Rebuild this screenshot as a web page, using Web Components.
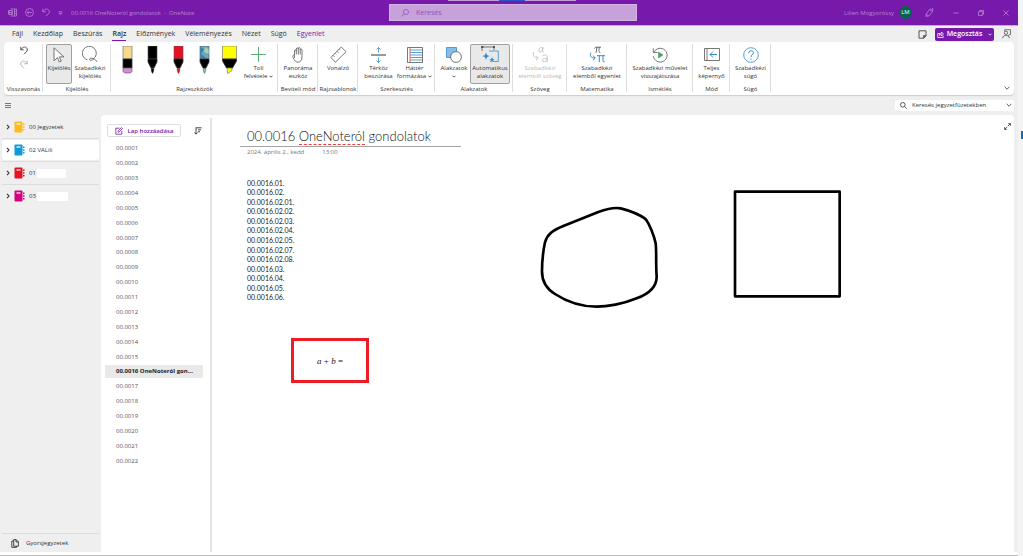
<!DOCTYPE html>
<html lang="hu">
<head>
<meta charset="utf-8">
<title>00.0016 OneNoteról gondolatok - OneNote</title>
<style>
  html, body { margin: 0; height: 100%; }
  body { background: #f4f4f4; color: #333; font: 7px/10px "Open Sans", "Noto Sans", sans-serif; overflow: hidden; }
</style>
</head>
<body>
<app-window></app-window>
<script>
const BASE = `
  * { box-sizing: border-box; }
  button, input { font: inherit; color: inherit; background: none; border: 0; padding: 0; margin: 0; outline: 0; }
  button { display: flex; align-items: center; justify-content: center; white-space: nowrap; }
  a { color: inherit; text-decoration: none; }
`;
function define(name, css, html) {
  customElements.define(name, class extends HTMLElement {
    connectedCallback() {
      if (this.shadowRoot) return;
      const t = document.createElement('template');
      t.innerHTML = `<style>${BASE}${css}</style>${typeof html === 'function' ? html(this) : html}`;
      this.attachShadow({ mode: 'open' }).append(t.content.cloneNode(true));
    }
  });
}

const pen = (top, tip, extra = '') => `
  <path d="M5 0h9v13H5z" fill="${top}" stroke="#555" stroke-width=".6"/>
  <path d="M5 13h9v3l-3 6H8l-3-6z" fill="#000"/><path d="M8 22.500h3l-.6 3.500-.9 1.500-.9-1.500z" fill="${tip}" stroke="#333" stroke-width=".4"/>${extra}`;

/* name: [width, height, drawing] */
const ICONS = {
  app: [9, 9, '<path d="M2.500 1h6v7h-6M.5 2.500h4v4h-4zM1.500 5.700V3.500l2 2.200V3.500M6.500 1v7M6.500 3.200h2M6.500 5.500h2"/>'],
  back: [9, 9, '<circle cx="4.500" cy="4.500" r="4"/><path d="M7 4.500H2.200M4 2.700 2.200 4.500 4 6.300"/>'],
  undo: [8, 9, '<path d="M.8.8v3h3M1 3.600C2.500 1 5 .4 6.500 1.800s1 3-.4 4.200L4 8.300"/>'],
  redo: [8, 9, '<path d="M7.200.8v3h-3M7 3.600C5.500 1 3 .4 1.500 1.800s-1 3 .4 4.200L4 8.300"/>'],
  more: [5, 4, '<path d="M.5.800h4M1 2.200h3L2.500 3.700z"/>'],
  search: [7, 7, '<circle cx="2.800" cy="2.800" r="2.300"/><path d="m4.500 4.500 2.200 2.200"/>'],
  searchflip: [8, 8, '<circle cx="5" cy="3" r="2.500"/><path d="M3.200 4.800.5 7.500"/>'],
  pencil: [9, 9, '<path d="M4.500 1.500 8 .7 7.500 3.500 3.800 8 1 6.500zM1 6.500.8 8.300 3.800 8M4.500 1.500l3 2"/>'],
  min: [6, 8, '<path d="M.5 4h5"/>'],
  restore: [6, 6, '<path d="M.5 1.700h3.800v3.800H.5zM1.700 1.700V.5h3.800v3.800H4.300"/>'],
  close: [6, 6, '<path d="m.5.500 5 5M5.500.500l-5 5"/>'],
  note: [9, 9, '<path d="M1 .8h7v5L5.500 8.200H1z" stroke-width="1"/><path d="M8 5.500H5.500v2.700z" fill="currentColor"/>'],
  share: [7, 7, '<path d="M3 2.500H.8v4h5.400V4.800M2.300 4.300c.3-1.500 1.300-2 2.200-2V1l2 2-2 2V3.700c-1 0-1.700 0-2.200.6z"/>'],
  person: [9, 10, '<path d="M2.800 2.500V.7h5.700v4.800H7.300L6.300 7"/><circle cx="4" cy="3.800" r="1.700"/><path d="M.6 9.200C1 5.300 7 5.300 7.400 9.200"/>'],
  down: [4, 3, '<path d="M.5.700 2 2.200 3.500.7"/>'],
  downbig: [6, 4, '<path d="M.6.800 3 3.200 5.400.8"/>'],
  right: [4, 6, '<path d="M1 .800 3 3 1 5.200" stroke-width="1.100"/>'],
  menu: [6, 7, '<path d="M0 1h6v1H0zM0 3h6v1H0zM0 5h6v1H0z" fill="#777" stroke="none"/>'],
  compose: [8, 8, '<path d="M4.500 1.200H.8v6h6V3.800M3 5.200l.4-1.500L6.500.600l1 1-3.100 3.100z"/>'],
  sort: [8, 8, '<path d="M2 .500v6.500M.5 5.500 2 7.200l1.500-1.700M2 .8h5.600M4 2.800h3M4 4.700h2" stroke-width=".9"/>'],
  expand: [7, 7, '<path d="M3.900 3.100 6.400.600M4.200.600h2.200v2.200M3.100 3.900.6 6.400M.6 4.200v2.200h2.200"/>'],
  quick: [8, 9, '<path d="M2.700.600h2.500l2.200 2.200v4.400H2.700zM5 .600V3h2.400M2.700 2H.8v6.400h4.700V7.200" stroke-width=".9"/>'],
  cursor: [12, 16, '<path d="M1 .800v13l3.400-3.200 2 4.400 1.900-.9-2-4.200h4.600z" fill="#fafafa"/>'],
  lasso: [16, 17, '<path d="M11 13.200a7 7 0 1 0-5.500.8M11.500 13c-2-1.500-4-.8-4 .4s2.500 1.500 4.300-.5c1.200.3 2.300 1.200 3.200 3"/>'],
  plus: [15, 15, '<path d="M7.500 0v15M0 7.500h15" stroke="#4aa564" stroke-width=".9"/>'],
  hand: [12, 16, '<path d="M2.500 8.500V4c0-1.500 1.800-1.500 1.800 0V2c0-1.500 2-1.500 2 0V1.500c0-1.300 1.900-1.300 1.900 0V3c0-1.300 1.800-1.200 1.800 0v7c0 3-1.500 5.200-4 5.200-2.300 0-3.300-1.500-5-4.700C.3 8.600 1.500 7.300 2.500 8.800V11M4.300 4v3.500M6.300 2v5.500M8.200 3v4.500"/>'],
  ruler: [17, 17, '<path d="m.8 11.500 10.500-10.500 4.700 4.700L5.500 16.200zM3 9.300l1.500 1.500M5 7.300l1 1M7 5.300l1.500 1.500M9 3.300l1 1"/>'],
  space: [15, 16, '<path d="M0 7h15v2H0z" fill="#999" stroke="none"/><path d="M7.500.500v5M7.500 10.500v5M5.500 2.500l2-2 2 2M5.500 13.500l2 2 2-2" stroke="#318bcb"/>'],
  lines: [16, 16, '<path d="M3 3h12.500M3 5.500h12.500M3 8h12.500M3 10.500h12.500M3 13h12.500" stroke="#318bcb"/><path d="M3 1v14" stroke="#d44"/><path d="M.5.500h15v15H.5z" stroke="#555"/>'],
  shapes: [16, 16, '<path d="M.5.500h10v10H.5z" fill="#83beec" stroke="#318bcb"/><circle cx="10" cy="10" r="5.400" fill="#fff"/>'],
  auto: [18, 17, '<path d="M1 5V1h13M1 1h2M13 0v4" stroke="#555"/><path d="M0 0h2v2H0zM12 0h2v2h-2z" fill="#555" stroke="none"/><path d="M8 5h9.300v10.500H9" stroke="#318bcb"/><path d="m5 6 1.300 2.900L9.200 10l-2.900 1.300L5 14.200l-1.300-2.900L.8 10l2.900-1.100zM11 10.500l1 2.300 2.300 1-2.300 1-1 2-1-2-2.300-1 2.300-1z" fill="#318bcb" stroke="#fff" stroke-width=".4"/>'],
  totext: [17, 17, '<path d="M2 6c-1.500 3-.5 6 4 6M4 9.700 6.300 12 4 14.200" /><path d="M10.500 1.500C7 .5 5.500 6 8 6.200c1.500 0 2.600-2.500 3-4.700-.7 2.500-.5 5 .8 4.500M10.500 10c1-1.500 4.700-1.500 4.700.8V16M15 12.500c-6-.3-5.500 3.300-3 3.300 1.500 0 3-.8 3-2.500"/>'],
  tomath: [17, 17, '<path d="M5.500 2.500c.5-1 1-1.300 2-1.300h4.500M8 1.300 7 6.800M10.300 1.300c-.5 3-.7 5.500 1 5.200" stroke="#444"/><path d="M2 6.500c-1.500 3-.5 5.500 4 5.500M4 9.700 6.300 12 4 14.200M8 9.700h8M10.300 9.700V16M14 9.700v5c0 1 .6 1.300 2 1.100" stroke="#318bcb" stroke-width="1"/>'],
  replay: [16, 16, '<path d="M2 5.200a6.900 6.900 0 1 1-.6 4M1.300 1.300v4.200h4.200"/><path d="M6.500 5v6l4.500-3z" fill="#4aa564" stroke="#2f8a4a" stroke-width=".5"/>'],
  full: [16, 13, '<path d="M.5.500h15v12H.5zM3 .500v12"/><path d="M13 6.500H6M9 3.500l-3 3 3 3" stroke="#318bcb" stroke-width="1"/>'],
  help: [16, 16, '<circle cx="8" cy="8" r="7.300" stroke="#318bcb"/><path d="M5.600 6.200c0-3.300 4.800-3.300 4.800-.3 0 1.800-2.400 2-2.400 4.100M8 11.300v1.300" stroke="#318bcb" stroke-width="1"/>'],
  eraser: [19, 28, '<path d="M5 0h9v13H5z" fill="#f8d98c" stroke="#777" stroke-width=".7"/><path d="M5 13h9v9H5z" fill="#000"/><path d="M5 22h9v3.500L12.500 27h-6L5 25.500z" fill="#d48cd8" stroke="#555" stroke-width=".6"/>'],
  penblack: [19, 28, pen('#000', '#000')],
  penred: [19, 28, pen('#e81123', '#e81123')],
  pengalaxy: [19, 28, pen('#68a9bd', '#7fc8bd', '<path d="M5.300 1 9 3 6 8l5 4H5.300z" fill="#3f7fae" stroke="none"/><path d="m10 1 3.600 2v5L9 6z" fill="#a8cfae" stroke="none"/>')],
  marker: [19, 28, '<path d="M2.500 0h14v13h-14z" fill="#ff0" stroke="#666" stroke-width=".6"/><path d="M2.500 13h14v2l-4 7h-6l-4-7z" fill="#000"/><path d="M7 22h5v2.500L7.500 27.500z" fill="#ff0" stroke="#666" stroke-width=".6"/>'],
  book: [11, 12, '<path d="M9 2.500h1.500v1.500H9zM9 5.200h1.500v1.500H9zM9 8h1.500v1.500H9z" fill="currentColor" stroke="none"/><rect x=".5" y=".500" width="8" height="11" rx="1" fill="currentColor" stroke="none"/><path d="M2.500 3h4" stroke="#fff" stroke-width="1.200"/>'],
};
define('ui-icon', `:host { display: block; flex: none; } svg { display: block; fill: none; stroke: currentColor; stroke-width: .8; }`,
  el => { const [w, h, d] = ICONS[el.getAttribute('name')]; return `<svg width="${w}" height="${h}" viewBox="0 0 ${w} ${h}" aria-hidden="true">${d}</svg>`; });

define('title-bar', `
  :host { display: block; position: relative; background: #7719aa; color: #b884d2; border-bottom: 1px solid #c9a6dc; }
  header { display: grid; grid-template-columns: 1fr 257px 1fr; align-items: center; height: 25px; padding: 0 9px 0 8px; }
  .left, .right { display: flex; align-items: center; }
  .left { gap: 8px; } .left span { white-space: nowrap; font-size: 6px; }
  .right { justify-content: flex-end; gap: 19px; font-size: 6px; }
  .user { display: flex; align-items: center; gap: 5px; margin-right: -6px; }
  .avatar { width: 13px; height: 13px; border-radius: 50%; background: #04634f; color: #fff; text-align: center; line-height: 13px; font-size: 6px; }
  label { justify-self: end; width: 248px; display: flex; align-items: center; gap: 7px; height: 17px; padding: 0 11px; background: #c6a1da; border: 1px solid #d2b3e2; color: #9153b8; }
  input { flex: 1; min-width: 0; } input::placeholder { color: #9153b8; opacity: 1; }
  .handle { position: absolute; top: 0; left: 44%; width: 128px; height: 1px; background: linear-gradient(90deg, #c39bd8 40%, #2b55c8 40% 60%, #c39bd8 60%); }
`, `<header>
  <div class="left"><ui-icon name="app"></ui-icon><button aria-label="Vissza"><ui-icon name="back"></ui-icon></button><button aria-label="Visszavonás"><ui-icon name="undo"></ui-icon></button><button aria-label="Továbbiak"><ui-icon name="more"></ui-icon></button><span>00.0016 OneNoteról gondolatok&nbsp; -&nbsp; OneNote</span></div>
  <label><ui-icon name="searchflip"></ui-icon><input type="text" placeholder="Keresés" aria-label="Keresés"></label>
  <div class="right"><div class="user"><span>Lilien Mogyoróssy</span><span class="avatar">LM</span></div><button aria-label="Toll"><ui-icon name="pencil"></ui-icon></button><button aria-label="Kis méret"><ui-icon name="min"></ui-icon></button><button aria-label="Előző méret"><ui-icon name="restore"></ui-icon></button><button aria-label="Bezárás"><ui-icon name="close"></ui-icon></button></div>
</header><div class="handle"></div>`);

define('ribbon-tabs', `
  :host { display: flex; align-items: center; justify-content: space-between; height: 16px; padding: 0 7px 0 12px; }
  nav, div { display: flex; align-items: center; } nav { gap: 10px; } div { gap: 8px; color: #555; }
  nav button { height: 14px; border-bottom: 1px solid transparent; }
  .on { font-weight: 600; border-color: #7719aa; } .ctx { color: #7719aa; }
  .share { background: #7719aa; color: #fff; border-radius: 2px; height: 13px; width: 59px; gap: 3px; font-weight: 600; }
  .share ui-icon:last-child { margin-left: 3px; }
`, `<nav><button>Fájl</button><button>Kezdőlap</button><button>Beszúrás</button><button class="on">Rajz</button><button>Előzmények</button><button>Véleményezés</button><button>Nézet</button><button>Súgó</button><button class="ctx">Egyenlet</button></nav>
  <div><button aria-label="Jegyzet"><ui-icon name="note"></ui-icon></button><button class="share"><ui-icon name="share"></ui-icon>Megosztás<ui-icon name="down"></ui-icon></button><button aria-label="Visszajelzés"><ui-icon name="person"></ui-icon></button></div>`);

define('ribbon-group', `
  :host { display: flex; flex-direction: column; align-items: center; justify-content: space-between; flex: none; width: var(--group-width); position: relative; font-size: 6px; line-height: 8px; }
  :host::after { content: ""; position: absolute; right: 0; top: 2px; bottom: 3px; width: 1px; background: #dedede; }
  .tools { display: flex; justify-content: center; padding-top: 2px; }
  .name { white-space: nowrap; padding-bottom: 2px; }
`, el => `<div class="tools"><slot></slot></div><div class="name">${el.getAttribute('label')}</div>`);

define('ribbon-button', `
  :host { display: block; flex: none; width: var(--button-width, 36px); }
  button { flex-direction: column; justify-content: flex-start; align-items: center; width: 100%; height: 40px; border: 1px solid transparent; border-radius: 2px; }
  .ic { height: 19px; display: flex; align-items: center; color: #555; }
  .line { display: flex; align-items: center; gap: 2px; height: 8px; }
  :host([on]) button { background: #e9e9e9; border-color: #a0a0a0; }
  :host([disabled]), :host([disabled]) .ic { color: #b9b9b9; }
`, el => {
  const arrow = el.hasAttribute('menu') ? '<ui-icon name="down"></ui-icon>' : '';
  const lines = el.getAttribute('label').split('|');
  return `<button${el.hasAttribute('disabled') ? ' disabled' : ''}><span class="ic"><ui-icon name="${el.getAttribute('icon')}"></ui-icon></span>${
    lines.map((l, i) => `<span class="line">${l}${i === lines.length - 1 ? arrow : ''}</span>`).join('')}</button>`;
});

define('pen-button', `:host { display: block; flex: 1; } button { width: 100%; height: 40px; padding: 2px 0 0; align-items: flex-start; }`,
  el => `<button aria-label="${el.getAttribute('label')}"><ui-icon name="${el.getAttribute('icon')}"></ui-icon></button>`);

define('ribbon-bar', `
  :host { display: flex; justify-content: space-between; height: 53px; margin: 0 4px; background: #fff; border-radius: 4px; box-shadow: 0 1px 1px #ccc; }
  .groups { display: flex; min-width: 0; }
  .history { display: flex; flex-direction: column; gap: 5px; padding-top: 2px; } .history button:last-child { color: #aaa; }
  .pens { display: flex; width: 128px; }
  .collapse { align-self: flex-end; margin: 0 4px 5px 0; }
`, `<div class="groups">
  <ribbon-group label="Visszavonás" style="--group-width:39px"><div class="history"><button aria-label="Visszavonás"><ui-icon name="undo"></ui-icon></button><button aria-label="Mégis"><ui-icon name="redo"></ui-icon></button></div></ribbon-group>
  <ribbon-group label="Kijelölés" style="--group-width:68px"><ribbon-button on icon="cursor" label="Kijelölés" style="--button-width:26px"></ribbon-button><ribbon-button icon="lasso" label="Szabadkézi|kijelölés"></ribbon-button></ribbon-group>
  <ribbon-group label="Rajzeszközök" style="--group-width:167px"><div class="pens"><pen-button icon="eraser" label="Radír"></pen-button><pen-button icon="penblack" label="Fekete toll"></pen-button><pen-button icon="penred" label="Piros toll"></pen-button><pen-button icon="pengalaxy" label="Galaxis toll"></pen-button><pen-button icon="marker" label="Sárga szövegkiemelő"></pen-button></div><ribbon-button menu icon="plus" label="Toll|felvétele" style="--button-width:32px"></ribbon-button></ribbon-group>
  <ribbon-group label="Beviteli mód" style="--group-width:40px"><ribbon-button icon="hand" label="Panoráma|eszköz"></ribbon-button></ribbon-group>
  <ribbon-group label="Rajzsablonok" style="--group-width:40px"><ribbon-button icon="ruler" label="Vonalzó"></ribbon-button></ribbon-group>
  <ribbon-group label="Szerkesztés" style="--group-width:77px"><ribbon-button icon="space" label="Térköz|beszúrása"></ribbon-button><ribbon-button menu icon="lines" label="Háttér|formázása"></ribbon-button></ribbon-group>
  <ribbon-group label="Alakzatok" style="--group-width:78px"><ribbon-button menu icon="shapes" label="Alakzatok|" style="--button-width:32px"></ribbon-button><ribbon-button on icon="auto" label="Automatikus|alakzatok" style="--button-width:40px"></ribbon-button></ribbon-group>
  <ribbon-group label="Szöveg" style="--group-width:54px"><ribbon-button disabled icon="totext" label="Szabadkézi|elemből szöveg"></ribbon-button></ribbon-group>
  <ribbon-group label="Matematika" style="--group-width:60px"><ribbon-button icon="tomath" label="Szabadkézi|elemből egyenlet"></ribbon-button></ribbon-group>
  <ribbon-group label="Ismétlés" style="--group-width:66px"><ribbon-button icon="replay" label="Szabadkézi művelet|visszajátszása"></ribbon-button></ribbon-group>
  <ribbon-group label="Mód" style="--group-width:37px"><ribbon-button icon="full" label="Teljes|képernyő"></ribbon-button></ribbon-group>
  <ribbon-group label="Súgó" style="--group-width:41px"><ribbon-button icon="help" label="Szabadkézi|súgó"></ribbon-button></ribbon-group>
</div><button class="collapse" aria-label="Menüszalag összecsukása"><ui-icon name="downbig"></ui-icon></button>`);

define('search-row', `
  :host { display: flex; align-items: center; justify-content: space-between; height: 20px; padding: 0 4px; }
  .menu { padding: 0 1px; }
  label { display: flex; align-items: center; gap: 5px; width: 119px; height: 11px; padding: 0 2px 0 5px; background: #fff; border-radius: 2px; font-size: 6px; }
  input { flex: 1; min-width: 0; } input::placeholder { color: #333; opacity: 1; }
`, `<button class="menu" aria-label="Navigáció"><ui-icon name="menu"></ui-icon></button>
  <label><ui-icon name="search"></ui-icon><input type="text" placeholder="Keresés jegyzetfüzetekben" aria-label="Keresés jegyzetfüzetekben"><ui-icon name="downbig"></ui-icon></label>`);

define('notebook-item', `
  :host { display: block; height: 23px; border-bottom: 1px solid #dcdcdc; padding: 1px 0; font-size: 6px; }
  :host([last]) { border-color: transparent; }
  a { display: flex; align-items: center; height: 20px; padding-left: 4px; border-radius: 3px; }
  :host([on]) a { background: #fff; }
  .book { color: var(--c); margin: 0 4px 0 4px; } .mask { width: var(--m, 0); height: 9px; margin-left: 1px; background: #fff; }
`, el => `<a href="#"><ui-icon name="right"></ui-icon><ui-icon class="book" name="book"></ui-icon><slot></slot><span class="mask"></span></a>`);

define('notebook-list', `
  :host { display: flex; flex-direction: column; justify-content: space-between; width: 101px; flex: none; padding: 1px 2px 0; }
  .quick { display: flex; align-items: center; gap: 7px; height: 19px; padding-left: 9px; border-top: 1px solid #dcdcdc; font-size: 6px; }
`, `<nav>
    <notebook-item style="--c:#fbbc1c">00 Jegyzetek</notebook-item>
    <notebook-item on style="--c:#109bd7">02 VALili</notebook-item>
    <notebook-item style="--c:#e81123;--m:29px">01</notebook-item>
    <notebook-item last style="--c:#d6007f;--m:31px">03</notebook-item>
  </nav><a class="quick" href="#"><ui-icon name="quick"></ui-icon>Gyorsjegyzetek</a>`);

define('page-list', `
  :host { display: block; flex: none; width: 111px; padding: 3px 0 0 4px; background: #fff; border-radius: 4px 0 0 0; }
  .in { height: 100%; border-right: 2px solid #e4e4e4; padding-right: 7px; }
  .head { display: flex; align-items: center; justify-content: space-between; height: 23px; padding: 2px 1px 0 2px; }
  .add { width: 74px; height: 13px; gap: 5px; border: 1px solid #ddd; border-radius: 2px; color: #7719aa; font-size: 6px; font-weight: 600; }
  ul { display: grid; grid-auto-rows: 1fr; height: 327px; margin: 0; padding: 0; list-style: none; font-size: 6px; color: #555; }
  li a { display: flex; align-items: center; height: 100%; padding-left: 11px; white-space: nowrap; }
  .on a { background: #e9e9e9; color: #222; font-weight: 700; height: 13px; border-radius: 1px; }
  .on { display: grid; align-items: center; }
`, () => `<div class="in"><div class="head"><button class="add"><ui-icon name="compose"></ui-icon>Lap hozzáadása</button><button aria-label="Rendezés"><ui-icon name="sort"></ui-icon></button></div>
  <ul>${Array.from({ length: 22 }, (_, i) => i === 15 ? '<li class="on"><a href="#">00.0016 OneNoteról gon...</a></li>' : `<li><a href="#">00.00${String(i + 1).padStart(2, '0')}</a></li>`).join('')}</ul></div>`);

define('note-page', `
  :host { display: block; flex: 1; min-width: 0; position: relative; background: #fff; border-radius: 0 4px 0 0; padding: 11px 0 0 28px; font-family: Lato, "Open Sans", sans-serif; }
  h1 { margin: 0; width: 221px; height: 21px; padding-left: 7px; border-bottom: 1px solid #a6a6a6; font-size: 13px; line-height: 20px; font-weight: 300; color: #111; white-space: nowrap; }
  h1 span { border-bottom: 1px dashed #f04040; }
  .date { display: flex; gap: 18px; padding-left: 7px; line-height: 11px; font-size: 6px; color: #777; font-family: "Open Sans", sans-serif; }
  ol { display: grid; grid-auto-rows: 1fr; align-items: center; height: 124px; margin: 20px 0 0; padding: 0 0 0 7px; list-style: none; color: #222; line-height: 8px; }
  .equation { position: absolute; left: 79px; top: 223px; width: 78px; height: 45px; border: 3px solid #ed1c24; display: flex; align-items: center; justify-content: center; font: 9px/10px "Liberation Serif", serif; color: #222; }
  .ink { position: absolute; left: 318px; top: 65px; }
  .ink path { fill: none; stroke: #000; stroke-width: 8; stroke-linejoin: round; }
  .expand { position: absolute; right: 3px; top: 8px; color: #333; }
`, () => `<h1>00.0016 <span>OneNoteról</span> gondolatok</h1><div class="date"><span>2024. április 2., kedd</span><span>13:00</span></div>
  <ol>${['01', '02', '02.01', '02.02', '02.03', '02.04', '02.05', '02.07', '02.08', '03', '04', '05', '06'].map(n => `<li>00.0016.${n}.</li>`).join('')}</ol>
  <div class="equation"><span><i>a</i> + <i>b</i> =</span></div>
  <svg class="ink" width="330" height="140" viewBox="0 0 990 420" role="img" aria-label="Alakzatok"><path d="M45 187C52 162 70 150 100 138C140 122 175 108 205 96C235 85 255 82 272 85C300 92 330 105 347 117C358 132 372 165 377 190C380 215 377 250 380 290C380 320 360 340 320 355C280 372 230 380 200 380C150 380 110 365 75 342C45 323 36 300 36 275C36 240 40 210 45 187ZM340 112 351 122"/><path d="M615 35H929V349H615Z"/></svg>
  <button class="expand" aria-label="Teljes nézet"><ui-icon name="expand"></ui-icon></button>`);

define('app-window', `
  :host { display: flex; height: 100%; }
  .app { flex: 1; min-width: 0; display: flex; flex-direction: column; background: #efefef; }
  main { flex: 1; min-height: 0; display: flex; padding-right: 4px; }
  .foot { height: 4px; background: #fff; border-bottom: 1px solid #b8b8b8; box-sizing: border-box; }
  .desk { width: 5px; display: flex; justify-content: flex-end; }
  .desk i { width: 2px; height: 8px; margin-top: 131px; background: #0f6cbd; }
`, `<div class="app"><title-bar></title-bar><ribbon-tabs></ribbon-tabs><ribbon-bar></ribbon-bar><search-row></search-row>
  <main><notebook-list></notebook-list><page-list></page-list><note-page></note-page></main><div class="foot"></div></div><div class="desk"><i></i></div>`);
</script>
</body>
</html>
